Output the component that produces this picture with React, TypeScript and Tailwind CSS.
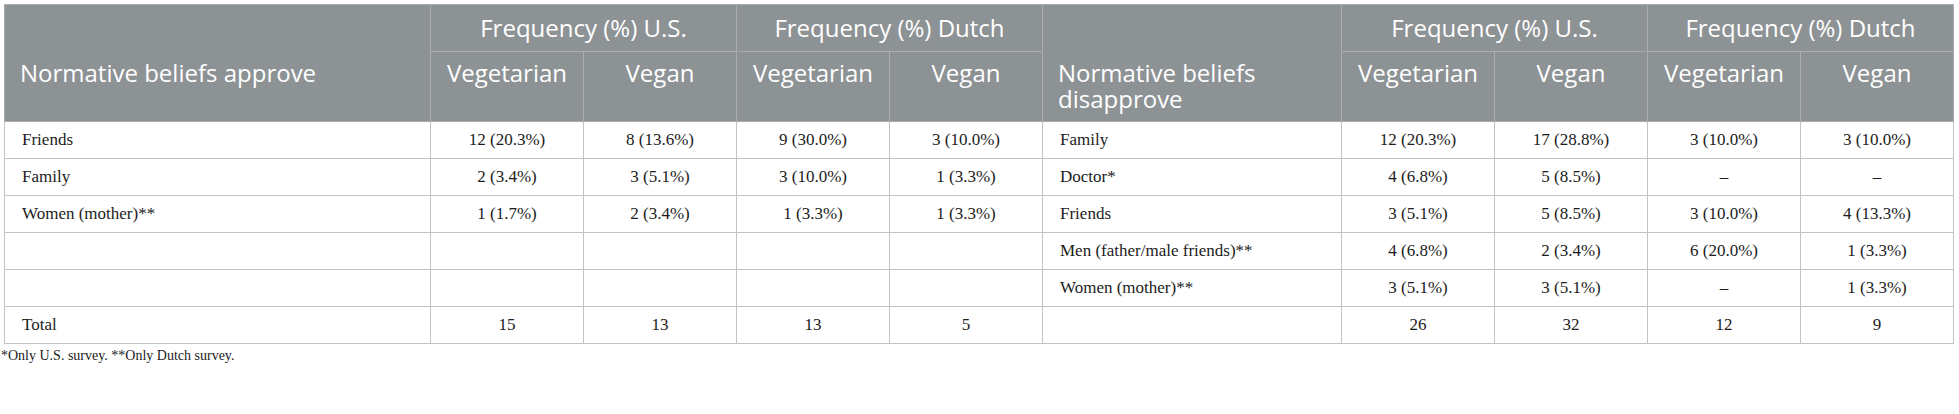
import React from "react";

type Row = { label: string; us: [string, string]; nl: [string, string] };

const approve: Row[] = [
  { label: "Friends", us: ["12 (20.3%)", "8 (13.6%)"], nl: ["9 (30.0%)", "3 (10.0%)"] },
  { label: "Family", us: ["2 (3.4%)", "3 (5.1%)"], nl: ["3 (10.0%)", "1 (3.3%)"] },
  { label: "Women (mother)**", us: ["1 (1.7%)", "2 (3.4%)"], nl: ["1 (3.3%)", "1 (3.3%)"] },
  { label: "", us: ["", ""], nl: ["", ""] },
  { label: "", us: ["", ""], nl: ["", ""] },
  { label: "Total", us: ["15", "13"], nl: ["13", "5"] },
];

const disapprove: Row[] = [
  { label: "Family", us: ["12 (20.3%)", "17 (28.8%)"], nl: ["3 (10.0%)", "3 (10.0%)"] },
  { label: "Doctor*", us: ["4 (6.8%)", "5 (8.5%)"], nl: ["–", "–"] },
  { label: "Friends", us: ["3 (5.1%)", "5 (8.5%)"], nl: ["3 (10.0%)", "4 (13.3%)"] },
  { label: "Men (father/male friends)**", us: ["4 (6.8%)", "2 (3.4%)"], nl: ["6 (20.0%)", "1 (3.3%)"] },
  { label: "Women (mother)**", us: ["3 (5.1%)", "3 (5.1%)"], nl: ["–", "1 (3.3%)"] },
  { label: "", us: ["26", "32"], nl: ["12", "9"] },
];

const head = "border border-[#a9adb0] text-white font-normal leading-[26px]";
const cell = "border border-[#c3c3c3] text-center align-middle";
const label = "border border-[#c3c3c3] text-left align-middle pl-[17px]";

export default function App() {
  return (
    <div className="bg-white min-h-screen pt-[4px] pl-[4px]" style={{ fontFamily: "'Liberation Serif', serif" }}>
      <table className="table-fixed border-collapse w-[1949px] border border-[#c3c3c3] text-[17px] text-[#1c1c1c]">
        <colgroup>
          <col className="w-[426px]" />
          <col className="w-[153px]" />
          <col className="w-[153px]" />
          <col className="w-[153px]" />
          <col className="w-[153px]" />
          <col className="w-[299px]" />
          <col className="w-[153px]" />
          <col className="w-[153px]" />
          <col className="w-[153px]" />
          <col className="w-[153px]" />
        </colgroup>
        <thead className="bg-[#8d9295] text-[24px]" style={{ fontFamily: "'Open Sans', sans-serif" }}>
          <tr className="h-[47px]">
            <th rowSpan={2} className={`${head} text-left align-top pl-[15px] pt-[55px]`}>
              Normative beliefs approve
            </th>
            <th colSpan={2} className={`${head} text-center align-middle`}>Frequency (%) U.S.</th>
            <th colSpan={2} className={`${head} text-center align-middle`}>Frequency (%) Dutch</th>
            <th rowSpan={2} className={`${head} text-left align-top pl-[15px] pt-[55px] pr-[30px]`}>
              Normative beliefs disapprove
            </th>
            <th colSpan={2} className={`${head} text-center align-middle`}>Frequency (%) U.S.</th>
            <th colSpan={2} className={`${head} text-center align-middle`}>Frequency (%) Dutch</th>
          </tr>
          <tr className="h-[70px]">
            {["Vegetarian", "Vegan", "Vegetarian", "Vegan"].map((t, i) => (
              <th key={`a${i}`} className={`${head} text-center align-top pt-[8px]`}>{t}</th>
            ))}
            {["Vegetarian", "Vegan", "Vegetarian", "Vegan"].map((t, i) => (
              <th key={`b${i}`} className={`${head} text-center align-top pt-[8px]`}>{t}</th>
            ))}
          </tr>
        </thead>
        <tbody>
          {approve.map((a, i) => {
            const d = disapprove[i];
            return (
              <tr key={i} className="h-[37px]">
                <td className={label}>{a.label}</td>
                <td className={cell}>{a.us[0]}</td>
                <td className={cell}>{a.us[1]}</td>
                <td className={cell}>{a.nl[0]}</td>
                <td className={cell}>{a.nl[1]}</td>
                <td className={label}>{d.label}</td>
                <td className={cell}>{d.us[0]}</td>
                <td className={cell}>{d.us[1]}</td>
                <td className={cell}>{d.nl[0]}</td>
                <td className={cell}>{d.nl[1]}</td>
              </tr>
            );
          })}
        </tbody>
      </table>
      <p className="mt-[2px] -ml-[3px] text-[14px] leading-[20px] text-[#1c1c1c]">
        *Only U.S. survey. **Only Dutch survey.
      </p>
    </div>
  );
}
